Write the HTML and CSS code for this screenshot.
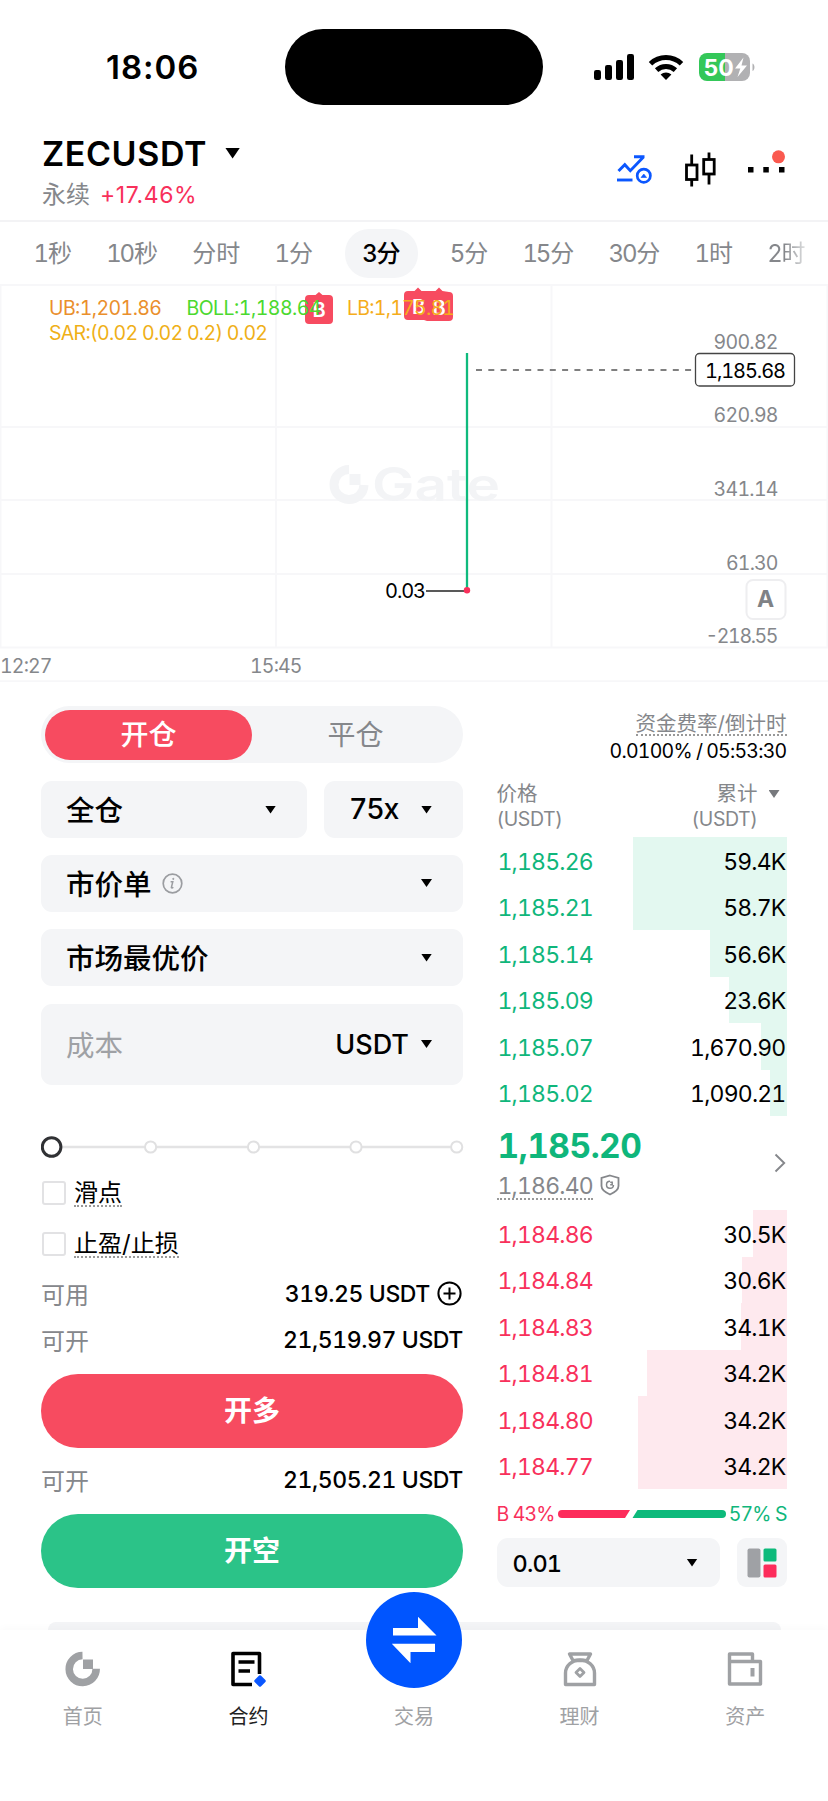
FILE: index.html
```html
<!DOCTYPE html>
<html lang="zh-CN">
<head>
<meta charset="utf-8">
<meta name="viewport" content="width=device-width, initial-scale=1">
<title>ZECUSDT 永续</title>
<link rel="stylesheet" href="styles.css">
</head>
<body>
<div class="phone">
  <div class="status">
    <span class="clock">18:06</span>
    <span class="island"></span>
    <svg class="status-icons" width="166" height="32" viewBox="592 51 166 32">
      <rect x="594" y="70" width="7" height="10" rx="2.2"/>
      <rect x="605" y="65" width="7" height="15" rx="2.2"/>
      <rect x="616" y="60" width="7" height="20" rx="2.2"/>
      <rect x="627" y="54" width="7" height="26" rx="2.2"/>
      <g fill="none" stroke="#000" stroke-width="5">
        <path d="M650.5 63.8a22.5 22.5 0 0 1 31 0"/>
        <path d="M656.6 70.2a14 14 0 0 1 18.8 0"/>
      </g>
      <path d="M666 80l-5.4-5.4a8 8 0 0 1 10.8 0z"/>
      <path d="M707 53h18v28h-18a8 8 0 0 1-8-8V61a8 8 0 0 1 8-8z" fill="#34c759"/>
      <path d="M725 53h17a8 8 0 0 1 8 8v12a8 8 0 0 1-8 8h-17z" fill="#b1b1b3"/>
      <path d="M752.5 63.5c2.6 1 2.6 6.500 0 7.500z" fill="#b1b1b3"/>
      <text class="battery-text" x="703.500" y="75.500">50</text>
      <path d="M743.500 57.500L735 68.500h5.300L737.500 77l9.500-11.500h-5.500z" fill="#fff"/>
    </svg>
  </div>

  <header class="head">
    <div class="pair">
      <div class="pair-name"><span>ZECUSDT</span><i class="tri tri-lg"></i></div>
      <div class="pair-sub"><span>永续</span><b>+17.46%</b></div>
    </div>
    <svg class="head-icons" width="172" height="44" viewBox="616 146 172 44" fill="none">
      <g stroke="#0b57ff" stroke-width="2.900">
        <path d="M618.500 171l6.300-6.300 5.500 6L643.500 157M634 156.800h10.500"/>
        <path d="M617 180h15.500"/>
        <circle cx="643.800" cy="175.700" r="6.600" stroke-width="2.700"/>
        <path d="M641 177.500l2.800-3.500 2.800 3.500z" fill="#0b57ff" stroke-width=".6"/>
      </g>
      <g stroke="#000" stroke-width="2.800">
        <rect x="686.500" y="165" width="10.500" height="14.500"/>
        <path d="M691.700 154.500V165M691.700 179.500v7"/>
        <rect x="703.700" y="159.500" width="10.500" height="14.500"/>
        <path d="M709 152.500v7M709 174v10.500"/>
      </g>
      <path d="M748 167h5.500v5.500H748zM763.300 167h5.500v5.500h-5.500zM779 167h5.500v5.500H779z" fill="#000"/>
      <circle cx="778.500" cy="156.800" r="6.500" fill="#fa594f"/>
    </svg>
  </header>

  <nav class="periods">
    <span><b>1</b>秒</span><span><b>10</b>秒</span><span>分时</span><span><b>1</b>分</span><span class="on"><b>3</b>分</span><span><b>5</b>分</span><span><b>15</b>分</span><span><b>30</b>分</span><span><b>1</b>时</span><span class="fade"><b>2</b>时</span>
  </nav>

  <svg class="chart" width="828" height="398" viewBox="0 284 828 398">
    <g stroke="#f7f7f9" stroke-width="2">
      <path d="M0 285h828M0 427h828M0 500h828M0 574h828M0 647.500h828M0 681.300h828"/>
      <path d="M.5 285v362M276 285v362M551.500 285v362M827.500 285v362"/>
    </g>
    <g fill="none" stroke="#f3f4f6">
      <path d="M349 469.500a15 15 0 1 0 15 15.500" stroke-width="9"/>
      <path d="M349.500 474h11v11h-11z" fill="#f3f4f6" stroke="none"/>
    </g>
    <text class="mark" x="372" y="500.500" textLength="128" lengthAdjust="spacingAndGlyphs">Gate</text>
    <path d="M467 353v237" stroke="#0fba7d" stroke-width="2.300"/>
    <path d="M426 591h40" stroke="#222" stroke-width="1.600"/>
    <circle cx="467" cy="590.300" r="3.200" fill="#f8305b"/>
    <path d="M476 370h216" stroke="#555" stroke-width="1.500" stroke-dasharray="6 6.300"/>
    <g fill="#f74b60">
      <path d="M309 295h6.500l3.500-3 3.500 3h6.500a4 4 0 0 1 4 4v21a4 4 0 0 1-4 4h-20a4 4 0 0 1-4-4v-21a4 4 0 0 1 4-4z"/>
      <path d="M408 291h6.500l3.500-3.500 3.500 3.500h14l3.500-3.500 3.500 3.500 6.500 1a4 4 0 0 1 4 4v21a4 4 0 0 1-4 4h-22l-3-1h-16a4 4 0 0 1-4-4v-21a4 4 0 0 1 4-4z"/>
    </g>
    <g class="flag">
      <text x="312.500" y="317">B</text><text x="412" y="313.500">B</text><text x="432.500" y="314.500">B</text>
    </g>
    <g class="ind">
      <text x="49" y="315" textLength="113" fill="#ea8f2c">UB:1,201.86</text>
      <text x="186.500" y="315" textLength="135" fill="#4bd92f">BOLL:1,188.64</text>
      <text x="347" y="315" textLength="108" fill="#f5ad1b">LB:1,175.81</text>
      <text x="49" y="339.500" textLength="219" fill="#efb017">SAR:(0.02 0.02 0.2) 0.02</text>
    </g>
    <g class="axis">
      <text x="713.500" y="348.800" textLength="65">900.82</text>
      <text x="713.500" y="422.300" textLength="65">620.98</text>
      <text x="713.500" y="495.800" textLength="65">341.14</text>
      <text x="726" y="569.800" textLength="52.500">61.30</text>
      <text x="705.500" y="643.300" textLength="73">-218.55</text>
      <text x="0" y="672.500" textLength="52.500">12:27</text>
      <text x="250" y="672.500" textLength="52.500">15:45</text>
    </g>
    <rect x="695.500" y="353.500" width="99" height="32.500" rx="4" fill="#fff" stroke="#444" stroke-width="1.300"/>
    <text class="tag" x="705" y="377.500" textLength="81">1,185.68</text>
    <text class="tag" x="385" y="598" textLength="41">0.03</text>
    <rect x="746.500" y="580" width="39" height="39" rx="6.500" fill="#fff" stroke="#eeeef0" stroke-width="2"/>
    <text class="auto" x="765.500" y="607" text-anchor="middle">A</text>
  </svg>

  <main class="trade">
    <section class="form">
      <div class="toggle"><span class="on">开仓</span><span>平仓</span></div>
      <div class="row">
        <div class="field grow"><span>全仓</span><i class="tri"></i></div>
        <div class="field lev"><span>75x</span><i class="tri"></i></div>
      </div>
      <div class="field"><span>市价单</span>
        <svg class="info" width="21" height="21" viewBox="0 0 21 21" fill="none" stroke="#9b9da1"><circle cx="10.500" cy="10.500" r="9.300" stroke-width="1.700"/><path d="M8.600 8.700h2.200l-1.400 5.600c-.2 1 1 .9 1.900 0" stroke-width="1.500"/><circle cx="11.300" cy="5.900" r=".6" fill="#9b9da1"/></svg>
        <i class="tri"></i></div>
      <div class="field"><span>市场最优价</span><i class="tri"></i></div>
      <div class="field cost"><span class="ph">成本</span><span class="unit">USDT</span><i class="tri"></i></div>
      <svg class="slider" width="423" height="22" viewBox="41 1136 423 22">
        <path d="M60 1147h398" stroke="#e3e3e4" stroke-width="2.700"/>
        <g fill="#fff" stroke="#e0e0e1" stroke-width="2"><circle cx="150.600" cy="1147" r="5.600"/><circle cx="253.500" cy="1147" r="5.600"/><circle cx="356" cy="1147" r="5.600"/><circle cx="456.700" cy="1147" r="5.600"/></g>
        <circle cx="51.600" cy="1147" r="9.300" fill="#fff" stroke="#303134" stroke-width="3"/>
      </svg>
      <label class="check"><i></i><span>滑点</span></label>
      <label class="check"><i></i><span>止盈/止损</span></label>
      <div class="kv first"><span>可用</span><b>319.25 USDT</b>
        <svg width="25" height="25" viewBox="0 0 25 25" fill="none" stroke="#000" stroke-width="2"><circle cx="12.500" cy="12.500" r="11.100"/><path d="M12.500 6.500v12M6.500 12.500h12"/></svg></div>
      <div class="kv"><span>可开</span><b>21,519.97 USDT</b></div>
      <div class="btn long">开多</div>
      <div class="kv mid"><span>可开</span><b>21,505.21 USDT</b></div>
      <div class="btn short">开空</div>
    </section>

    <section class="book">
      <div class="funding"><span>资金费率/倒计时</span><b>0.0100% / 05:53:30</b></div>
      <div class="cols">
        <div>价格<br><em>(USDT)</em></div>
        <div class="sum"><div>累计<br><em>(USDT)</em></div><i class="tri grey"></i></div>
      </div>
      <div class="levels bids">
        <div class="lv"><b>1,185.26</b><span>59.4K</span><i style="width:153.500px"></i></div>
        <div class="lv"><b>1,185.21</b><span>58.7K</span><i style="width:153.500px"></i></div>
        <div class="lv"><b>1,185.14</b><span>56.6K</span><i style="width:77px"></i></div>
        <div class="lv"><b>1,185.09</b><span>23.6K</span><i style="width:58px"></i></div>
        <div class="lv"><b>1,185.07</b><span>1,670.90</span><i style="width:25.500px"></i></div>
        <div class="lv"><b>1,185.02</b><span>1,090.21</span><i style="width:17px"></i></div>
      </div>
      <div class="last">
        <div>
          <div class="price">1,185.20</div>
          <div class="mark-price"><span>1,186.40</span>
            <svg width="20" height="22" viewBox="0 0 20 22" fill="none" stroke="#85878b"><path d="M10 1.500L18.500 4v8c0 4-4 6.500-8.500 8.500C5.500 18.500 1.500 16 1.500 12V4z" stroke-width="1.800"/><path d="M10 7.300a3.500 3.500 0 1 0 3.500 3.700M10.200 8.200h2v2.500h-2" stroke-width="1.500"/></svg>
          </div>
        </div>
        <svg class="chev" width="12" height="20" viewBox="0 0 12 20" fill="none" stroke="#85878b" stroke-width="1.900"><path d="M1.500 1.500l8.700 8.500-8.700 8.500"/></svg>
      </div>
      <div class="levels asks">
        <div class="lv"><b>1,184.86</b><span>30.5K</span><i style="width:33.500px"></i></div>
        <div class="lv"><b>1,184.84</b><span>30.6K</span><i style="width:44.500px"></i></div>
        <div class="lv"><b>1,184.83</b><span>34.1K</span><i style="width:46px"></i></div>
        <div class="lv"><b>1,184.81</b><span>34.2K</span><i style="width:139.500px"></i></div>
        <div class="lv"><b>1,184.80</b><span>34.2K</span><i style="width:148.500px"></i></div>
        <div class="lv"><b>1,184.77</b><span>34.2K</span><i style="width:148.500px"></i></div>
      </div>
      <div class="ratio"><span class="b">B 43%</span>
        <svg width="168" height="8" viewBox="0 0 168 8"><path d="M4 0h68l-5 8H4a4 4 0 0 1 0-8z" fill="#fd2c5b"/><path d="M79.500 0H164a4 4 0 0 1 0 8H74.500z" fill="#0dba7b"/></svg>
        <span class="s">57% S</span></div>
      <div class="tools">
        <div class="field step"><span>0.01</span><i class="tri"></i></div>
        <div class="depth"><svg width="30" height="30" viewBox="0 0 30 30"><rect x=".5" y=".5" width="13" height="29" rx="2" fill="#9fa1a5"/><rect x="16.500" y=".5" width="13" height="13" rx="1.500" fill="#0dba7b"/><rect x="16.500" y="16.500" width="13" height="13" rx="1.500" fill="#fd2c5b"/></svg></div>
      </div>
    </section>
    <div class="peek"></div>
  </main>

  <nav class="dock">
    <div class="tab"><svg width="36" height="36" viewBox="0 0 36 36"><path d="M17.500 4.500a13.500 13.500 0 1 0 13.700 13.300" fill="none" stroke="#9fa1a4" stroke-width="7.500"/><path d="M18 8.500h10V18H18z" fill="#9fa1a4"/></svg><span>首页</span></div>
    <div class="tab on"><svg width="36" height="36" viewBox="0 0 36 36"><path d="M29.500 23V2.500H3V33.500H22" fill="none" stroke="#000" stroke-width="3.600" stroke-linejoin="round"/><path d="M8.500 11h16M8.500 20h11.500" stroke="#000" stroke-width="3.600"/><path d="M30 25.500l4.500 4.500-4.500 4.500-4.500-4.500z" fill="#0b57ff" stroke="#0b57ff" stroke-width="2.500" stroke-linejoin="round"/></svg><span>合约</span></div>
    <div class="tab"><svg width="36" height="36"></svg><span>交易</span></div>
    <div class="tab"><svg width="36" height="36" viewBox="0 0 36 36" fill="none" stroke="#9fa1a4" stroke-width="3.400" stroke-linejoin="round"><path d="M7.500 3h21l-3.500 6.500H11z"/><path d="M3.500 33.500V22a14.500 13 0 0 1 29 0v11.500z"/><path d="M18 17.500l4 4-4 4-4-4z" stroke-width="2.800"/></svg><span>理财</span></div>
    <div class="tab"><svg width="36" height="36" viewBox="0 0 36 36" fill="none" stroke="#9fa1a4" stroke-width="3.400" stroke-linejoin="round"><path d="M2.500 10.500h31v22.500h-31zM2.500 10.500V3h23v7.500"/><path d="M25.500 17v8.500" stroke-width="4"/></svg><span>资产</span></div>
    <div class="swap"><svg width="46" height="48" viewBox="0 0 46 48" fill="#fff"><path d="M2 12h25V.8L45.500 19.500H2zM44 36H19.500v11.200L.8 27.700H44z"/></svg></div>
  </nav>
</div>
</body>
</html>
```
FILE: styles.css
```css
* { box-sizing: border-box; }
html, body { margin: 0; padding: 0; background: #fff; }
body {
  font-family: Inter, "Noto Sans CJK SC", "Liberation Sans", sans-serif;
  font-variant-numeric: tabular-nums;
  color: #000;
}
i, em { font-style: normal; }
b { font-weight: 400; }
.phone {
  width: 828px;
  height: 1801px;
  display: flex;
  flex-direction: column;
  overflow: hidden;
  background: #fff;
}

.tri {
  flex: none;
  width: 11px;
  height: 8px;
  background: #000;
  clip-path: polygon(0 0, 100% 0, 50% 100%);
}
.tri-lg { width: 15px; height: 11px; }
.tri.grey { background: #77797d; }

/* status bar */
.status {
  height: 120px;
  display: grid;
  grid-template-columns: 285px 258px 1fr;
  align-items: start;
}
.clock {
  padding: 46px 0 0 106px;
  font-size: 33px;
  line-height: 42px;
  font-weight: 600;
  font-variant-numeric: normal;
  letter-spacing: 1px;
}
.island { height: 76px; margin-top: 29px; border-radius: 38px; background: #000; }
.status-icons { margin: 51px 0 0 49px; }
.battery-text { font-size: 23px; font-weight: 700; fill: #fff; letter-spacing: 0; font-variant-numeric: normal; }

/* pair header */
.head { height: 100px; display: flex; justify-content: space-between; padding: 0 40px 0 42px; }
.pair-name {
  display: flex;
  align-items: center;
  gap: 18px;
  height: 40px;
  margin-top: 13px;
  font-size: 34px;
  font-weight: 600;
  letter-spacing: .6px;
}
.pair-sub { display: flex; gap: 10px; height: 32px; margin-top: 6px; line-height: 32px; font-size: 24px; color: #85878b; }
.pair-sub b { color: #f8305b; font-size: 23px; font-variant-numeric: normal; letter-spacing: .6px; }
.head-icons { margin-top: 26px; }

/* period tabs */
.periods {
  height: 64px;
  display: flex;
  gap: 34.300px;
  align-items: center;
  padding: 0 22px 0 33.500px;
  border-top: 2px solid #f3f3f5;
  font-size: 24px;
  color: #85878b;
  white-space: nowrap;
  overflow: hidden;
}
.periods span { height: 49px; line-height: 50px; }
.periods b { letter-spacing: -2.200px; margin-right: 1px; font-weight: inherit; }
.periods .on {
  margin: 0 -2px;
  padding: 0 17px;
  border-radius: 24px;
  background: #f4f5f7;
  color: #000;
  font-weight: 500;
}
.fade { background: linear-gradient(90deg, #85878b 45%, #e4e5e6); background-clip: text; -webkit-background-clip: text; color: transparent; }

/* chart */
.chart { flex: none; display: block; }
.chart text { font-size: 19.500px; }
.chart .mark { font-size: 46px; font-weight: 600; fill: #f3f4f6; }
.axis { fill: #85878b; }
.chart .tag { font-size: 20px; fill: #000; }
.chart .auto { font-size: 23px; font-weight: 700; fill: #808286; }
.chart .flag text { font-size: 20px; font-weight: 600; fill: #fff; }

/* trading area */
.trade {
  height: 948px;
  flex: none;
  display: grid;
  grid-template-columns: 422px 290px;
  grid-template-rows: 940px 8px;
  column-gap: 33.500px;
  padding: 0 41px;
}
.form { padding-top: 24px; display: flex; flex-direction: column; }
.toggle {
  height: 57px;
  margin-bottom: 18px;
  padding: 4px;
  display: grid;
  grid-template-columns: 207px 1fr;
  border-radius: 29px;
  background: #f4f5f7;
  font-size: 28px;
  line-height: 50px;
  text-align: center;
  color: #85878b;
}
.toggle .on { border-radius: 25px; background: #f74b60; color: #fff; font-weight: 500; }
.row { display: flex; gap: 17px; margin-bottom: -1px; }
.field {
  height: 57px;
  margin-bottom: 17.500px;
  padding: 0 31px 0 25px;
  display: flex;
  align-items: center;
  border-radius: 11px;
  background: #f4f5f7;
  font-size: 28.500px;
  font-weight: 500;
}
.field span { margin-top: -2px; }
.field .tri { margin-left: auto; }
.grow { flex: 1; }
.lev { width: 139px; }
.lev span { letter-spacing: -1.200px; }
.info { margin-left: 10px; }
.field.cost { height: 81px; margin-bottom: 0; }
.ph { color: #9fa1a5; font-weight: 400; }
.field .unit { margin: 0 0 0 auto; font-size: 27px; }
.field.cost .tri { margin-left: 12px; }
.slider { margin: 51px 0 0; flex: none; }
.check { display: flex; align-items: flex-start; gap: 8px; height: 28px; margin: 20px 0 3px 1px; font-size: 24px; line-height: 30px; }
.check i { width: 24px; height: 24px; margin-top: 3px; border: 2px solid #e2e2e4; border-radius: 3px; }
.check span { height: 29px; border-bottom: 2px dotted #999; line-height: 29px; }
.check + .check { margin-top: 20px; }
.kv { height: 46px; display: flex; align-items: center; font-size: 24px; color: #85878b; }
.kv.first { margin-top: 11px; }
.kv span { margin-top: -1px; }
.kv b { margin-left: auto; color: #000; font-size: 23px; font-weight: 500; letter-spacing: -.4px; }
.kv svg { margin: 0 1px 0 7px; }
.btn {
  height: 74px;
  margin-top: 11px;
  border-radius: 37px;
  color: #fff;
  text-align: center;
  font-size: 28px;
  font-weight: 600;
  line-height: 74px;
}
.long { background: #f74b60; }
.short { background: #2bc388; }
.kv.mid { margin-top: 9px; }

/* order book */
.book { padding-top: 26px; display: flex; flex-direction: column; }
.funding { display: flex; flex-direction: column; align-items: flex-end; font-size: 20.500px; color: #85878b; }
.funding span { height: 28px; line-height: 31px; border-bottom: 2px dotted #999; }
.funding b { color: #000; font-size: 19.500px; line-height: 30px; letter-spacing: -.75px; word-spacing: -.5px; }
.cols { display: flex; justify-content: space-between; height: 71px; padding-top: 15px; font-size: 20.500px; line-height: 25px; color: #85878b; }
.cols em { font-size: 19.500px; letter-spacing: -.4px; }
.sum { display: flex; gap: 11px; padding-right: 7px; text-align: right; }
.sum .tri { margin-top: 9px; }
.lv { position: relative; height: 46.500px; display: flex; justify-content: space-between; align-items: center; padding: 3px 1px 0; font-size: 23px; }
.lv b, .lv span { position: relative; z-index: 1; letter-spacing: -.8px; }
.lv i { position: absolute; right: 0; top: 0; bottom: 0; }
.bids b { color: #0fb67b; }
.asks b { color: #f8305b; }
.bids i { background: #e3f8f0; }
.asks i { background: #fee9ee; }
.last { height: 94px; display: flex; justify-content: space-between; align-items: center; padding-right: 1px; }
.price { font-size: 33.500px; line-height: 41px; margin-top: -1px; padding-left: 1px; font-weight: 700; color: #0fb67b; letter-spacing: -.5px; }
.mark-price { display: flex; align-items: center; gap: 7px; color: #85878b; font-size: 23px; margin-top: 3px; }
.mark-price span { height: 30px; line-height: 33px; border-bottom: 2px dotted #999; letter-spacing: -.8px; padding-left: 1px; }
.ratio { height: 49px; display: flex; align-items: center; justify-content: space-between; font-size: 19.500px; white-space: nowrap; letter-spacing: -.9px; }
.ratio .b { color: #f8305b; }
.ratio .s { color: #0fb67b; }
.tools { display: flex; justify-content: space-between; }
.field.step { width: 223px; height: 49px; margin: 0; padding: 0 22px 0 16px; font-size: 23.500px; letter-spacing: -.8px; }
.field.step span { margin-top: 1px; }
.depth { width: 50px; height: 49px; border-radius: 9px; background: #f4f5f7; display: grid; place-items: center; }
.peek { grid-column: 1 / -1; margin: 0 6px 0 7px; border-radius: 18px 18px 0 0; background: #f3f4f6; }

/* bottom navigation */
.dock {
  position: relative;
  height: 171px;
  display: grid;
  grid-template-columns: repeat(5, 1fr);
  background: #fff;
  box-shadow: 0 -2px 8px rgba(0, 0, 0, .025);
}
.tab { display: flex; flex-direction: column; align-items: center; padding-top: 21px; gap: 15px; font-size: 20px; line-height: 31px; color: #9fa1a4; }
.tab.on { color: #222; }
.swap {
  position: absolute;
  left: 366px;
  top: -38px;
  width: 96px;
  height: 96px;
  border-radius: 50%;
  background: #0055ff;
  display: grid;
  place-items: center;
}
```
